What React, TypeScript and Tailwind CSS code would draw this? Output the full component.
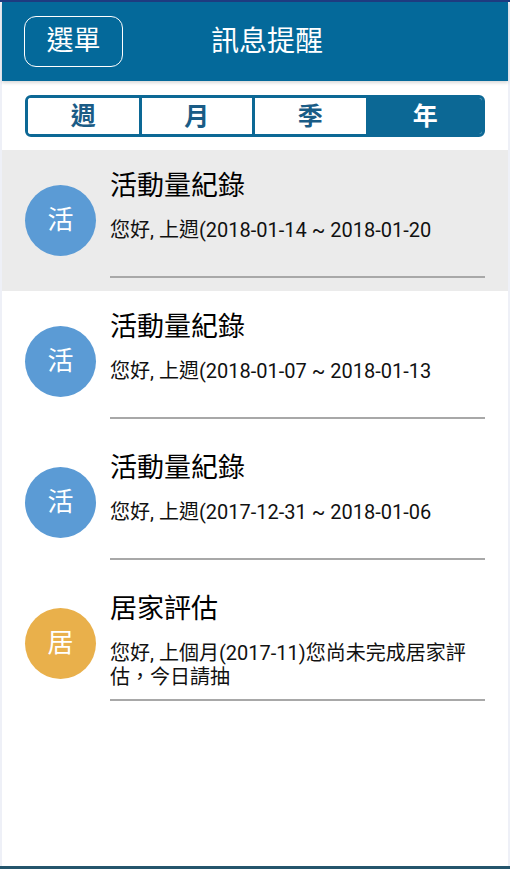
const font = { fontFamily: '"Roboto", "Noto Sans CJK TC", sans-serif' };

type Item = { badge: string; color: string; title: string; body: string; active?: boolean };

const items: Item[] = [
  { badge: "活", color: "bg-[#5b9bd5]", title: "活動量紀錄", body: "您好, 上週(2018-01-14 ~ 2018-01-20", active: true },
  { badge: "活", color: "bg-[#5b9bd5]", title: "活動量紀錄", body: "您好, 上週(2018-01-07 ~ 2018-01-13" },
  { badge: "活", color: "bg-[#5b9bd5]", title: "活動量紀錄", body: "您好, 上週(2017-12-31 ~ 2018-01-06" },
  { badge: "居", color: "bg-[#e9b04b]", title: "居家評估", body: "您好, 上個月(2017-11)您尚未完成居家評估，今日請抽" },
];

const tabs = ["週", "月", "季", "年"];

const App = () => {
  return (
    <div
      className="w-[510px] h-[869px] flex flex-col bg-[#eef0f7] border-t-2 border-[#1e3b80] border-b-[3px] border-b-[#24556c] px-[2px] overflow-hidden"
      style={font}
    >
      <header className="h-[79px] shrink-0 bg-[#04699a] flex items-center px-[22px] relative shadow-[0_2px_3px_rgba(0,0,0,0.15)] z-10">
        <button className="w-[99px] h-[51px] rounded-[12px] border-[1.5px] border-white text-white text-[27px] leading-none flex items-center justify-center">
          選單
        </button>
        <h1 className="absolute left-[209px] text-white text-[28px] leading-none">訊息提醒</h1>
      </header>

      <main className="flex-1 bg-white flex flex-col">
        <div className="px-[23px] pt-[14px] pb-[13px]">
          <div className="h-[42px] border-[3px] border-[#0c6895] rounded-[6px] overflow-hidden grid grid-cols-4">
            {tabs.map((t, i) => (
              <div
                key={t}
                className={
                  i === 3
                    ? "bg-[#0c6895] text-white font-bold text-[25px] flex items-center justify-center"
                    : "bg-white text-[#1a5c86] font-bold text-[25px] flex items-center justify-center border-r-[3px] border-[#0c6895]"
                }
              >
                {t}
              </div>
            ))}
          </div>
        </div>

        {items.map((it, i) => (
          <div
            key={i}
            className={`h-[141px] shrink-0 flex items-center pl-[23px] pr-[23px] ${it.active ? "bg-[#ebebeb]" : "bg-white"}`}
          >
            <div
              className={`w-[71px] h-[71px] shrink-0 rounded-full ${it.color} text-white text-[26px] flex items-center justify-center`}
            >
              {it.badge}
            </div>
            <div className="ml-[14px] flex-1 h-full flex flex-col">
              <div className="mt-[19px] text-[27px] leading-[34px] text-black">{it.title}</div>
              <div className="mt-[15px] text-[20px] leading-[24px] text-[#111] pr-[12px]">{it.body}</div>
              <div className="flex-1" />
              <div className="mb-[13px] h-[2px] bg-[#a8a8a8]" />
            </div>
          </div>
        ))}
      </main>
    </div>
  );
};

export default App;
